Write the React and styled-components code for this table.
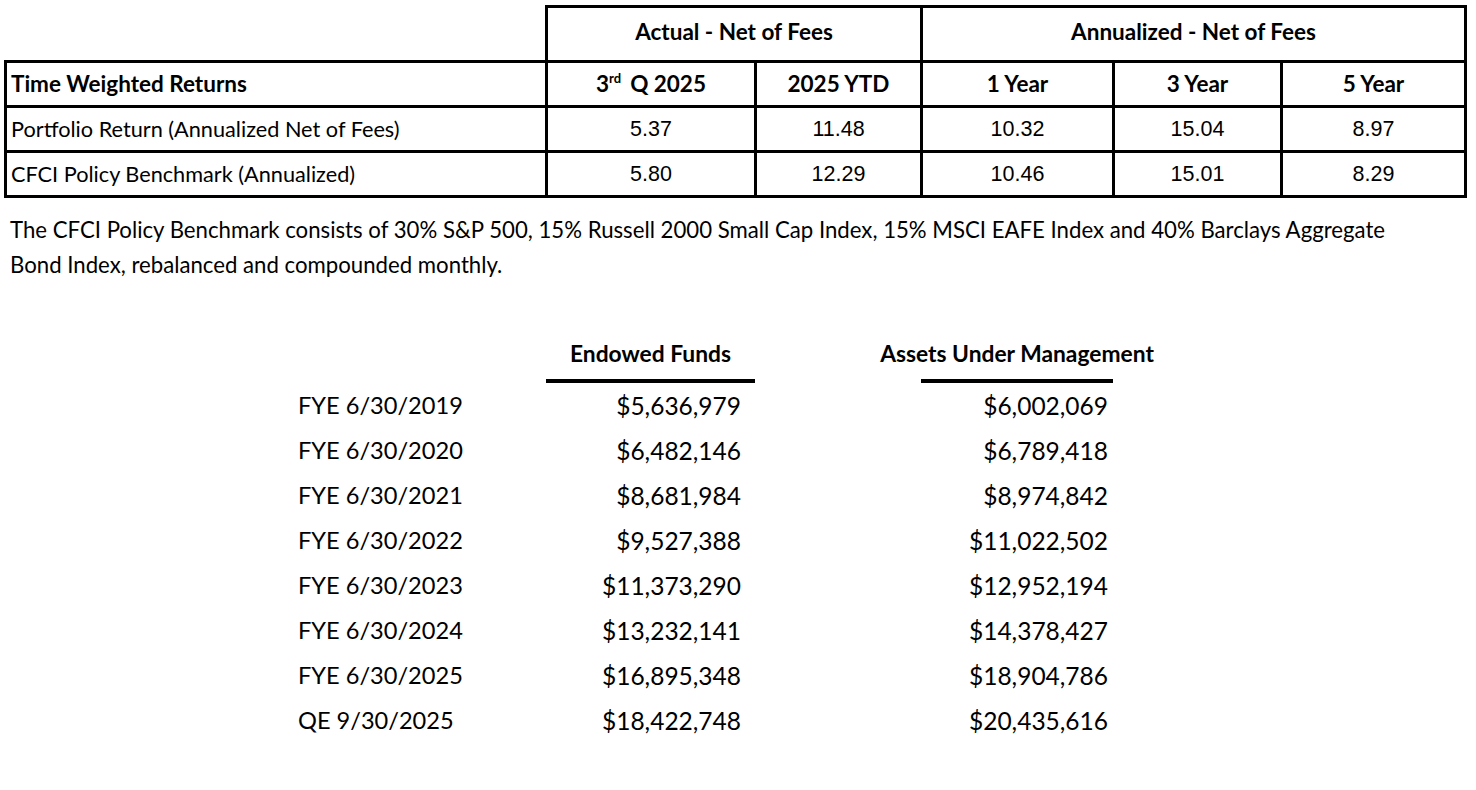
import React from "react";
import styled, { createGlobalStyle } from "styled-components";

const Global = createGlobalStyle`
  html, body { margin: 0; padding: 0; background: #ffffff; }
  body { font-family: "Lato", "Liberation Sans", sans-serif; color: #000; }
`;

const Page = styled.div`
  width: 1476px;
  height: 790px;
  box-sizing: border-box;
  padding: 5px 0 0 4px;
  overflow: hidden;
`;

const Table = styled.table`
  border-collapse: collapse;
  table-layout: fixed;
  width: 1462px;
`;

const Cell = styled.td`
  border: 3px solid #000;
  height: ${(p) => p.$h || 42}px;
  padding: 0 0 ${(p) => p.$pb || 0}px 0;
  box-sizing: border-box;
  text-align: ${(p) => (p.$left ? "left" : "center")};
  padding-left: ${(p) => (p.$left ? "4px" : "0")};
  font-family: ${(p) => (p.$num ? '"Liberation Sans", Arial, sans-serif' : '"Lato", sans-serif')};
  font-weight: ${(p) => (p.$bold ? 700 : 400)};
  font-size: ${(p) => (p.$num ? "21.5px" : p.$bold ? "22.5px" : "21.7px")};
  line-height: 26px;
  white-space: nowrap;
  vertical-align: middle;
`;

const Blank = styled.td`
  border: none;
  padding: 0;
`;

const Sup = styled.sup`
  font-size: 13px;
  vertical-align: 9px;
  line-height: 0;
  margin-right: 9px;
`;

const Note = styled.p`
  margin: 14px 0 0 6px;
  font-size: 22.2px;
  line-height: 35px;
  width: 1430px;
`;

const Summary = styled.div`
  display: grid;
  grid-template-columns: 248px 209px 166px 192px;
  margin: 58px 0 0 294px;
`;

const HeadLabel = styled.div`
  grid-column: ${(p) => p.$col};
  display: flex;
  justify-content: center;
  font-weight: 700;
  font-size: 22.8px;
  line-height: 26px;
  padding-bottom: 13px;
  border-bottom: 4px solid #000;
  white-space: nowrap;
`;

const Spacer = styled.div`
  grid-column: ${(p) => p.$col};
`;

const RowLabel = styled.div`
  grid-column: 1;
  font-size: 23.6px;
  height: 45px;
  line-height: 45px;
  white-space: nowrap;
`;

const Money = styled.div`
  grid-column: ${(p) => p.$col};
  font-size: 24.5px;
  height: 45px;
  line-height: 45px;
  text-align: right;
  padding-right: ${(p) => p.$pr}px;
  white-space: nowrap;
`;

const rows = [
  ["FYE 6/30/2019", "$5,636,979", "$6,002,069"],
  ["FYE 6/30/2020", "$6,482,146", "$6,789,418"],
  ["FYE 6/30/2021", "$8,681,984", "$8,974,842"],
  ["FYE 6/30/2022", "$9,527,388", "$11,022,502"],
  ["FYE 6/30/2023", "$11,373,290", "$12,952,194"],
  ["FYE 6/30/2024", "$13,232,141", "$14,378,427"],
  ["FYE 6/30/2025", "$16,895,348", "$18,904,786"],
  ["QE 9/30/2025", "$18,422,748", "$20,435,616"],
];

export default function App() {
  return (
    <Page>
      <Global />
      <Table>
        <colgroup>
          <col style={{ width: 541 }} />
          <col style={{ width: 209 }} />
          <col style={{ width: 166 }} />
          <col style={{ width: 192 }} />
          <col style={{ width: 168 }} />
          <col style={{ width: 184 }} />
        </colgroup>
        <tbody>
          <tr>
            <Blank />
            <Cell $bold $h={55} $pb={5} colSpan={2}>Actual - Net of Fees</Cell>
            <Cell $bold $h={55} $pb={5} colSpan={3}>Annualized - Net of Fees</Cell>
          </tr>
          <tr>
            <Cell $bold $left $h={45}>Time Weighted Returns</Cell>
            <Cell $bold $h={45}>3<Sup>rd</Sup>Q 2025</Cell>
            <Cell $bold $h={45}>2025 YTD</Cell>
            <Cell $bold $h={45}>1 Year</Cell>
            <Cell $bold $h={45}>3 Year</Cell>
            <Cell $bold $h={45}>5 Year</Cell>
          </tr>
          <tr>
            <Cell $left $h={45}>Portfolio Return (Annualized Net of Fees)</Cell>
            <Cell $num $h={45}>5.37</Cell>
            <Cell $num $h={45}>11.48</Cell>
            <Cell $num $h={45}>10.32</Cell>
            <Cell $num $h={45}>15.04</Cell>
            <Cell $num $h={45}>8.97</Cell>
          </tr>
          <tr>
            <Cell $left $h={45}>CFCI Policy Benchmark (Annualized)</Cell>
            <Cell $num $h={45}>5.80</Cell>
            <Cell $num $h={45}>12.29</Cell>
            <Cell $num $h={45}>10.46</Cell>
            <Cell $num $h={45}>15.01</Cell>
            <Cell $num $h={45}>8.29</Cell>
          </tr>
        </tbody>
      </Table>
      <Note>
        The CFCI Policy Benchmark consists of 30% S&amp;P 500, 15% Russell 2000 Small Cap Index, 15% MSCI EAFE Index and 40% Barclays Aggregate Bond Index, rebalanced and compounded monthly.
      </Note>
      <Summary>
        <Spacer $col={1} />
        <HeadLabel $col={2}>Endowed Funds</HeadLabel>
        <Spacer $col={3} />
        <HeadLabel $col={4}>Assets Under Management</HeadLabel>
        {rows.map(([label, endowed, aum]) => (
          <React.Fragment key={label}>
            <RowLabel>{label}</RowLabel>
            <Money $col={2} $pr={14}>{endowed}</Money>
            <Spacer $col={3} />
            <Money $col={4} $pr={5}>{aum}</Money>
          </React.Fragment>
        ))}
      </Summary>
    </Page>
  );
}
